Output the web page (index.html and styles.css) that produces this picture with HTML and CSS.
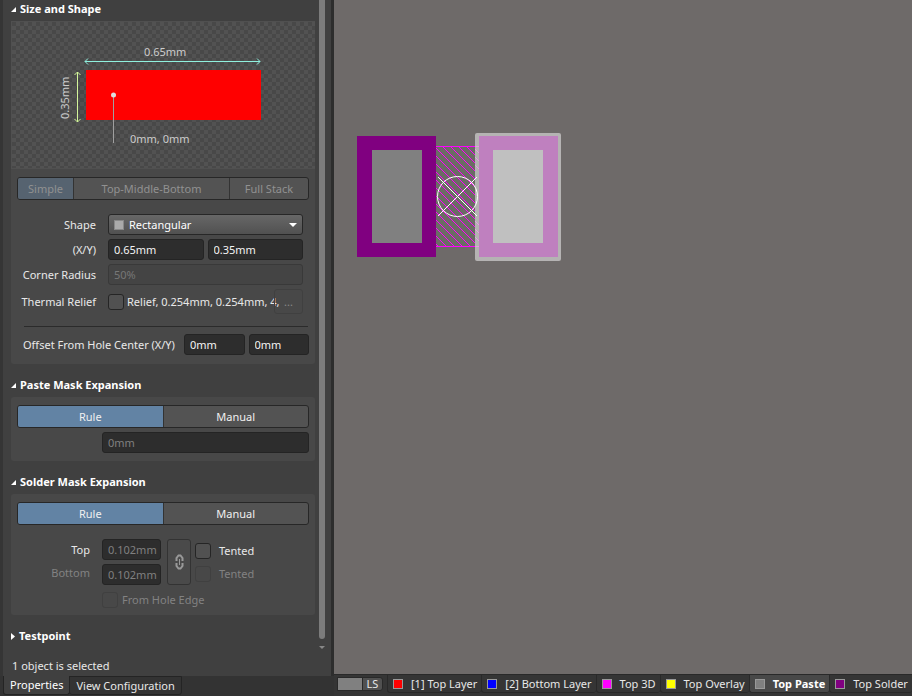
FILE: index.html
```html
<!DOCTYPE html>
<html lang="en">
<head>
<meta charset="UTF-8" />
<title>PCB Editor - Pad Properties</title>
<link rel="stylesheet" href="styles.css">
</head>
<body>
<div class="app">

  <aside class="panel">
    <div class="scroll-area">
      <div class="sections">
        <h2><svg class="arrow" viewBox="0 0 5 5"><path d="M5 0V5H0z"/></svg>Size and Shape</h2>
        <section class="card">
          <div class="preview">
            <svg viewBox="0 0 303 146">
              <rect class="pad" x="74" y="48" width="175" height="50"/>
              <path class="dim-x" d="M73 39.5H248M76 36.5L73 39.5L76 42.5M245 36.5L248 39.5L245 42.5"/>
              <path class="dim-y" d="M65.5 50V100M62.5 53L65.5 50L68.5 53M62.5 97L65.5 100L68.5 97"/>
              <path class="leader" d="M101.5 73V121"/>
              <circle class="dot" cx="101.5" cy="73" r="2.5"/>
              <text x="132" y="34">0.65mm</text>
              <text x="118" y="121">0mm, 0mm</text>
              <text transform="translate(57 97) rotate(-90)">0.35mm</text>
            </svg>
          </div>
          <div class="segmented stack">
            <button class="active" disabled>Simple</button>
            <button disabled>Top-Middle-Bottom</button>
            <button disabled>Full Stack</button>
          </div>
          <div class="shape-form">
            <label for="shape">Shape</label>
            <div class="select-wrap">
              <span class="swatch"></span>
              <select id="shape"><option>Rectangular</option><option>Round</option><option>Octagonal</option></select>
              <svg class="caret" viewBox="0 0 8 5"><path d="M0 0H8L4 4z"/></svg>
            </div>
            <label for="size-x">(X/Y)</label>
            <div class="pair">
              <input type="text" id="size-x" value="0.65mm">
              <input type="text" aria-label="Size Y" value="0.35mm">
            </div>
            <label for="radius">Corner Radius</label>
            <input type="text" id="radius" class="flat" value="50%" disabled>
            <label for="relief">Thermal Relief</label>
            <div class="relief">
              <input type="checkbox" id="relief">
              <span>Relief, 0.254mm, 0.254mm, 4,</span>
              <button disabled>...</button>
            </div>
          </div>
          <hr>
          <div class="offset">
            <label for="offset-x">Offset From Hole Center (X/Y)</label>
            <input type="text" id="offset-x" value="0mm">
            <input type="text" aria-label="Offset Y" value="0mm">
          </div>
        </section>

        <h2><svg class="arrow" viewBox="0 0 5 5"><path d="M5 0V5H0z"/></svg>Paste Mask Expansion</h2>
        <section class="card paste">
          <div class="segmented">
            <button class="active">Rule</button>
            <button>Manual</button>
          </div>
          <input type="text" aria-label="Paste mask expansion" value="0mm" disabled>
        </section>

        <h2><svg class="arrow" viewBox="0 0 5 5"><path d="M5 0V5H0z"/></svg>Solder Mask Expansion</h2>
        <section class="card solder">
          <div class="segmented">
            <button class="active">Rule</button>
            <button>Manual</button>
          </div>
          <div class="mask-form">
            <div class="mask-labels">
              <label for="mask-top">Top</label>
              <label for="mask-bottom" class="muted">Bottom</label>
            </div>
            <div class="mask-values">
              <input type="text" id="mask-top" value="0.102mm" disabled>
              <input type="text" id="mask-bottom" value="0.102mm" disabled>
            </div>
            <button class="link" aria-label="Link values" disabled>
              <svg viewBox="0 0 9 16"><path d="M1.5 7V4L3.5 1.5H5.5L7.5 4V7M1.5 9V12L3.5 14.5H5.5L7.5 12V9"/><path class="bar" d="M4.5 5V11"/></svg>
            </button>
            <div class="tented">
              <label><input type="checkbox">Tented</label>
              <label class="muted"><input type="checkbox" disabled>Tented</label>
            </div>
          </div>
          <label class="hole-edge muted"><input type="checkbox" disabled>From Hole Edge</label>
        </section>

        <h2 class="closed"><svg class="arrow" viewBox="0 0 4 7"><path d="M0 0L4 3.5L0 7z"/></svg>Testpoint</h2>
      </div>
      <div class="scrollbar">
        <div class="thumb"></div>
        <svg viewBox="0 0 6 3"><path d="M0 0H6L3 3z"/></svg>
      </div>
    </div>
    <p class="selection">1 object is selected</p>
    <nav class="panel-tabs">
      <button class="active">Properties</button>
      <button>View Configuration</button>
    </nav>
  </aside>

  <main class="editor">
    <div class="board">
      <svg width="240" height="150" viewBox="340 120 240 150">
        <defs>
          <pattern id="hatch" width="8" height="8" patternUnits="userSpaceOnUse">
            <path d="M-1 -1L9 9M-1 7L1 9M7 -1L9 1" stroke="#f0f" stroke-width="1"/>
          </pattern>
        </defs>
        <rect x="357" y="136" width="79" height="121" fill="#800080"/>
        <rect x="372" y="150" width="50" height="93" fill="#808080"/>
        <rect x="436" y="146" width="43" height="101" fill="#6b6b65"/>
        <rect x="436" y="146" width="43" height="101" fill="url(#hatch)"/>
        <path d="M436 146.5H479M436 246.5H479" stroke="#f0f"/>
        <rect x="475" y="133" width="86" height="128" rx="2" fill="#b5b3b3"/>
        <rect x="479" y="136" width="79" height="121" fill="#bf80bf"/>
        <rect x="493" y="150" width="50" height="93" fill="#c0c0c0"/>
        <path d="M475 146.5H479M475 246.5H479M475 149L479 153M475 157L479 161M475 165L479 169M475 221L479 225M475 229L479 233M475 237L479 241" stroke="#e898e8"/>
        <g class="origin">
          <circle cx="457.5" cy="196.5" r="20"/>
          <path d="M438 177L477 216M477 177L438 216"/>
        </g>
      </svg>
    </div>
    <nav class="layers">
      <button class="layer-set"><i></i><span>LS</span></button>
      <button class="layer"><i class="top"></i>[1] Top Layer</button>
      <button class="layer"><i class="bottom"></i>[2] Bottom Layer</button>
      <button class="layer"><i class="top3d"></i>Top 3D</button>
      <button class="layer"><i class="overlay"></i>Top Overlay</button>
      <button class="layer current"><i class="paste-layer"></i>Top Paste</button>
      <button class="layer"><i class="solder-layer"></i>Top Solder</button>
    </nav>
  </main>

</div>
</body>
</html>
```
FILE: styles.css
```css
* { box-sizing: border-box; }
body { margin: 0; background: #353535; color: #e8e8e8; font: 11px/16px "Noto Sans", "Open Sans", sans-serif; }
button, input, select { font: inherit; color: inherit; margin: 0; }
.app { display: flex; height: 100vh; overflow: hidden; }

/* properties panel */
.panel { display: flex; flex-direction: column; flex: 0 0 334px; padding-left: 3px; background: linear-gradient(to right, #353535 3px, #404040 3px, #404040 331px, #2d2d2d 331px); }
.scroll-area { display: flex; flex: 1; min-height: 0; }
.sections { width: 304px; margin-left: 8px; }
h2 { display: flex; align-items: center; gap: 4px; height: 33px; margin: 0; font-size: 11px; color: #fff; }
h2:first-child { height: 21px; padding-bottom: 3px; }
.card + h2 { padding-top: 9px; }
.arrow { width: 5px; height: 5px; fill: #fff; }
.closed .arrow { width: 4px; height: 7px; }
.card { padding: 8px 6px 9px; background: #484848; border-radius: 3px; }
.preview { margin: -8px -6px 8px; background: repeating-conic-gradient(#525252 0 25%, #484848 0 50%) 0 0 / 8px 8px; border: solid #505050; border-width: 1px 0 1px 1px; }
.preview svg { display: block; width: 100%; fill: none; }
.preview .pad { fill: #f00; }
.dim-x { stroke: #8ff0df; }
.dim-y { stroke: #d2f59a; }
.leader { stroke: #a0a0a0; }
.preview .dot { fill: #ddd; }
.preview text { fill: #ccc; }

.segmented { display: flex; height: 23px; border: 1px solid #272727; border-radius: 3px; background: #535353; overflow: hidden; }
.segmented button { flex: 1; padding: 0; border: 0; background: none; color: #f0f0f0; line-height: 20px; }
.segmented button + button { border-left: 1px solid #333; }
.segmented .active { background: #6283a4; }
.stack button { color: #919191; }
.stack .active { flex: 0 0 55px; background: #566370; }
.stack button:last-child { flex: 0 0 79px; }

input[type="text"] { display: block; width: 100%; min-width: 0; height: 21px; padding: 0 0 0 5px; border: 1px solid #242424; border-radius: 3px; background: #2d2d2d; color: #f4f4f4; }
input[type="text"]:disabled { color: #808080; }
input.flat:disabled { background: #444; border-color: #393939; color: #777; }
input[type="checkbox"] { flex: none; width: 16px; height: 16px; appearance: none; border: 1px solid #252525; border-radius: 3px; background: #515151; }
input[type="checkbox"]:disabled { border-color: #404040; background: #484848; }

.shape-form { display: grid; grid-template-columns: 79px minmax(0, 1fr); column-gap: 12px; row-gap: 4px; align-items: center; margin: 14px 6px 0 0; }
.shape-form > label { text-align: right; white-space: nowrap; }
.select-wrap { position: relative; height: 21px; }
.select-wrap select { display: block; width: 100%; height: 21px; padding: 0 20px; appearance: none; border: 1px solid #272727; border-radius: 3px; background: linear-gradient(#676767, #515151); color: #fff; }
.swatch { position: absolute; left: 6px; top: 6px; width: 10px; height: 10px; background: #aaa; border: 1px solid #888; }
.caret { position: absolute; right: 6px; top: 9px; width: 8px; height: 5px; fill: #fff; }
.pair { display: flex; gap: 4px; }
.relief { display: flex; align-items: center; height: 25px; }
.relief span { flex: 1; min-width: 0; margin-left: 3px; white-space: nowrap; }
.relief button { flex: none; width: 29px; height: 25px; padding: 0; border: 1px solid #404040; border-radius: 3px; background: none; color: #888; }
hr { height: 1px; margin: 12px 1px 7px 7px; border: 0; background: #2b2b2b; }
.offset { display: flex; align-items: center; gap: 4px; margin-left: 6px; }
.offset label { flex: 0 0 157px; white-space: nowrap; }

.paste { padding-bottom: 8px; }
.paste input[type="text"] { width: 207px; margin: 4px 0 0 85px; }

.mask-form { display: flex; margin-top: 14px; }
.mask-labels { width: 73px; margin-right: 12px; text-align: right; }
.mask-labels label { display: block; height: 23px; line-height: 22px; }
.mask-values { display: grid; gap: 4px; width: 59px; }
.link { display: grid; place-items: center; width: 24px; height: 46px; margin: 0 4px 0 6px; padding: 0; border: 1px solid #333; border-radius: 3px; background: #4a4a4a; }
.link svg { width: 9px; height: 16px; fill: none; stroke: #999; stroke-width: 2; }
.link .bar { stroke-width: 1; }
.tented label { display: flex; align-items: center; gap: 8px; height: 23px; }
.solder { padding-bottom: 7px; }
.hole-edge { display: flex; align-items: center; gap: 4px; margin: 7px 0 0 85px; }
.muted { color: #828282; }

.scrollbar { width: 6px; margin-left: 4px; }
.thumb { height: calc(100% - 19px); border-radius: 0 0 3px 3px; background: #7c7c7c; }
.scrollbar svg { display: block; width: 6px; height: 3px; margin-top: 7px; fill: #888; }
.selection { margin: 0 0 2px 9px; }
.panel-tabs { display: flex; height: 20px; margin-left: -3px; padding-left: 3px; background: #333; }
.panel-tabs button { height: 19px; padding: 0 6px; border: 1px solid #242424; border-radius: 0 0 3px 3px; background: #333; white-space: nowrap; }
.panel-tabs button + button { margin-left: -1px; }
.panel-tabs .active { border-top: 0; background: #404040; color: #fff; }

/* board view */
.editor { display: flex; flex-direction: column; flex: 1; min-width: 0; }
.board { position: relative; flex: 1; background: #6e6a69; }
.board svg { position: absolute; left: 6px; top: 120px; }
.origin { fill: none; stroke: #fff; }
.layers { display: flex; height: 22px; padding: 0 0 3px 3px; border-top: 1px solid #292929; background: #353535; }
.layers button { white-space: nowrap; }
.layer-set { display: flex; flex: none; width: 46px; height: 14px; margin: 2px 4px 0 0; padding: 0; border: 1px solid #292929; border-radius: 0 3px 3px 0; background: #505050; line-height: 12px; }
.layer-set i { width: 25px; height: 12px; background: #808080; border-right: 1px solid #292929; }
.layer-set span { flex: 1; }
.layer { display: flex; flex: none; align-items: center; gap: 8px; padding: 0 4px 0 5px; border: solid #292929; border-width: 0 0 1px 1px; border-radius: 0 0 3px 3px; background: #353535; }
.layer i { width: 10px; height: 10px; border: 1px solid #999; }
.layer.current { background: #484848; color: #fff; font-weight: bold; }
.top { background: #f00; }
.bottom { background: #00f; }
.top3d { background: #f0f; }
.overlay { background: #ff0; }
.paste-layer { background: #808080; }
.solder-layer { background: #800080; }
```
